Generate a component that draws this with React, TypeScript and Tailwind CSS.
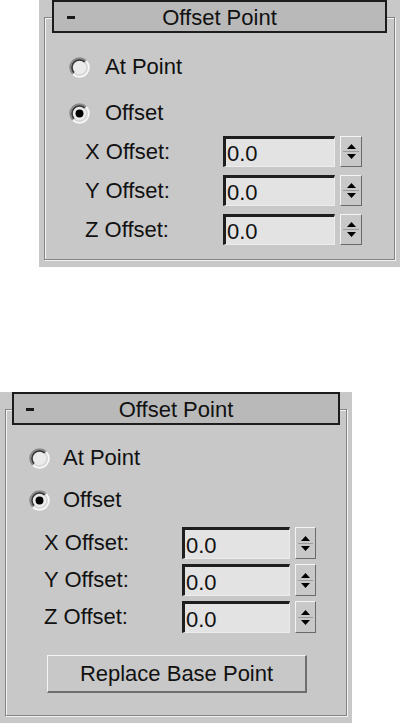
import React from "react";

function Radio({ checked }: { checked: boolean }) {
  return (
    <svg width="21" height="21" viewBox="0 0 18 18" className="shrink-0">
      <circle cx="9" cy="9" r="8" fill="#ebebeb" />
      <path d="M 3.34 14.66 A 8 8 0 0 1 14.66 3.34" stroke="#8a8a8a" strokeWidth="1.6" fill="none" />
      <path d="M 14.66 3.34 A 8 8 0 0 1 3.34 14.66" stroke="#f8f8f8" strokeWidth="1.6" fill="none" />
      <path d="M 4.4 13.6 A 6.5 6.5 0 0 1 13.6 4.4" stroke="#3a3a3a" strokeWidth="1.5" fill="none" />
      <path d="M 13.6 4.4 A 6.5 6.5 0 0 1 4.4 13.6" stroke="#d6d6d6" strokeWidth="1.5" fill="none" />
      {checked && <circle cx="9" cy="9" r="3.4" fill="#000" />}
    </svg>
  );
}

function Spinner({ cls }: { cls: string }) {
  return (
    <div className={`flex flex-col border-t border-l border-t-[#f4f4f4] border-l-[#f4f4f4] border-b border-r border-b-[#6a6a6a] border-r-[#6a6a6a] bg-[#c8c8c8] ${cls}`}>
      <div className="flex-1 flex items-end justify-center pb-[2px]">
        <svg width="9" height="5" viewBox="0 0 9 5">
          <polygon points="4.5,0 9,5 0,5" fill="#000" />
        </svg>
      </div>
      <div className="h-px bg-[#9a9a9a] mx-[2px]" />
      <div className="flex-1 flex items-start justify-center pt-[2px]">
        <svg width="9" height="5" viewBox="0 0 9 5">
          <polygon points="0,0 9,0 4.5,5" fill="#000" />
        </svg>
      </div>
    </div>
  );
}

type Cfg = {
  panel: string;
  groove: string;
  title: string;
  dash: string;
  atRow: string;
  offRow: string;
  radioGap: string;
  fields: string;
  fieldRow: string;
  input: string;
  spinner: string;
  button?: string;
};

function Panel({ cfg }: { cfg: Cfg }) {
  const rows = ["X Offset:", "Y Offset:", "Z Offset:"];
  return (
    <div className={`bg-[#c8c8c8] px-[5px] pt-[17px] ${cfg.panel}`}>
      <div
        className={`border border-[#858585] shadow-[inset_1px_1px_0_#f2f2f2,1px_1px_0_#f2f2f2] flex flex-col ${cfg.groove}`}
      >
        <div
          className={`-mt-[18px] h-[33px] border-2 border-[#1c1c1c] bg-[#b9b9b9] flex items-center relative ${cfg.title}`}
        >
          <div className={`absolute top-[14px] w-[8px] h-[3px] bg-[#1a1a1a] ${cfg.dash}`} />
          <span className="flex-1 text-center pt-[2px]">Offset Point</span>
        </div>
        <div className={`flex items-center ${cfg.atRow} ${cfg.radioGap}`}>
          <Radio checked={false} />
          <span>At Point</span>
        </div>
        <div className={`flex items-center ${cfg.offRow} ${cfg.radioGap}`}>
          <Radio checked={true} />
          <span>Offset</span>
        </div>
        <div className={`flex flex-col ${cfg.fields}`}>
          {rows.map((r) => (
            <div key={r} className={`flex items-center ${cfg.fieldRow}`}>
              <span className="w-[138px] shrink-0">{r}</span>
              <div
                className={`flex items-center bg-[#e3e3e3] border-t-[3px] border-l-[3px] border-t-[#1e1e1e] border-l-[#1e1e1e] border-b border-r border-b-[#ececec] border-r-[#ececec] pl-[1px] pt-[3px] ${cfg.input}`}
              >
                0.0
              </div>
              <Spinner cls={cfg.spinner} />
            </div>
          ))}
        </div>
        {cfg.button && (
          <div
            className={`flex items-center justify-center border-t border-l border-t-[#f4f4f4] border-l-[#f4f4f4] border-b-2 border-r-2 border-b-[#6e6e6e] border-r-[#6e6e6e] bg-[#c8c8c8] ${cfg.button}`}
          >
            Replace Base Point
          </div>
        )}
      </div>
    </div>
  );
}

const top: Cfg = {
  panel: "ml-[39px] w-[361px] h-[267px]",
  groove: "h-[243px]",
  title: "mx-[7px]",
  dash: "left-[13px]",
  atRow: "mt-[19px] h-[30px] pl-[24px]",
  offRow: "mt-[16px] h-[30px] pl-[24px]",
  radioGap: "gap-[15px]",
  fields: "mt-[8px] pl-[40px] gap-[8px]",
  fieldRow: "h-[31px]",
  input: "w-[112px] h-[31px]",
  spinner: "ml-[5px] w-[22px] h-[31px]",
};

const bottom: Cfg = {
  panel: "mt-[125px] w-[352px] h-[331px]",
  groove: "h-[307px]",
  title: "mx-[6px]",
  dash: "left-[12px]",
  atRow: "mt-[18px] h-[30px] pl-[23px]",
  offRow: "mt-[12px] h-[30px] pl-[23px]",
  radioGap: "gap-[13px]",
  fields: "mt-[12px] pl-[38px] gap-[5px]",
  fieldRow: "h-[32px]",
  input: "w-[108px] h-[32px]",
  spinner: "ml-[5px] w-[21px] h-[32px]",
  button: "mt-[22px] ml-[41px] w-[260px] h-[38px]",
};

export default function App() {
  return (
    <div className="w-[400px] h-[723px] bg-white overflow-hidden font-['Liberation_Sans',Arial,sans-serif] text-[22px] leading-none text-[#111]">
      <Panel cfg={top} />
      <Panel cfg={bottom} />
    </div>
  );
}
